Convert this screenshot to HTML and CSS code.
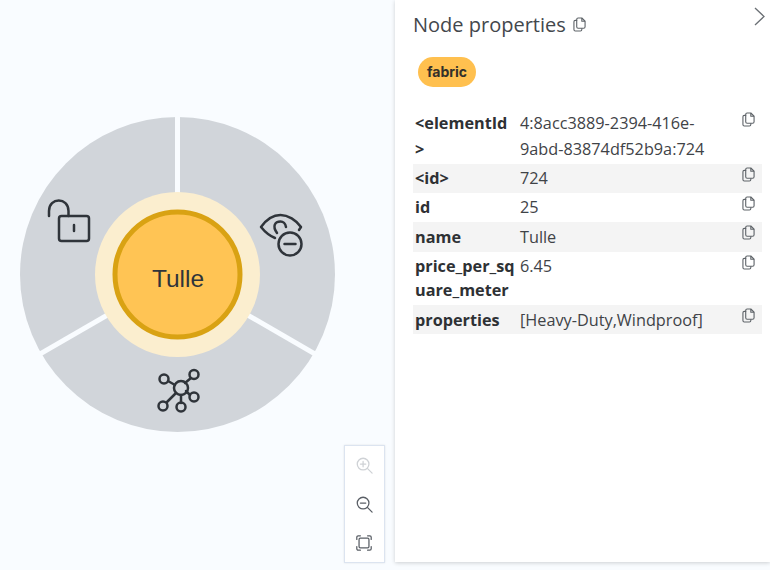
FILE: index.html
```html
<!DOCTYPE html>
<html lang="en">
<head>
    <meta charset="UTF-8">
    <title>Node properties</title>
    <meta name="viewport" content="width=device-width, initial-scale=1.0">
    <link rel="stylesheet" href="styles.css">
</head>
<body>
    <svg width="0" height="0" class="defs">
        <symbol id="copy" viewBox="0 0 14 16">
            <path d="M4.500 3.500H2.500C1.700 3.500 1 4.200 1 5V13.500C1 14.300 1.700 15 2.500 15H8C8.800 15 9.500 14.300 9.500 13.500V12" />
            <path d="M5.500 1H9.500L13 4.500V10.500C13 11.300 12.300 12 11.500 12H5.500C4.700 12 4 11.300 4 10.500V2.500C4 1.700 4.700 1 5.500 1Z" />
            <path d="M9.500 1V4.500H13" />
        </symbol>
    </svg>
    <main class="graph">
        <svg class="wheel" width="395" height="570" viewBox="0 0 395 570">
            <circle cx="177.500" cy="274.500" r="157.500" fill="#d1d5da" />
            <g stroke="#f9fcff" stroke-width="5">
                <line x1="177.500" y1="274.500" x2="177.500" y2="110" />
                <line x1="177.500" y1="274.500" x2="320" y2="356.800" />
                <line x1="177.500" y1="274.500" x2="35" y2="356.800" />
            </g>
            <circle cx="177.500" cy="274.500" r="82.500" fill="#fbeecf" />
            <circle cx="177.500" cy="274.500" r="62.500" fill="#ffc454" stroke="#d9a213" stroke-width="5" />
            <text class="node-label" x="178" y="286.500" text-anchor="middle">Tulle</text>
            <g class="wheel-icon">
                <path d="M49 216v-5c0-14 19.500-14 19.500 0v5" />
                <rect x="59" y="216" width="30" height="25" rx="2.500" />
                <path d="M74 225v6" />
            </g>
            <g class="wheel-icon">
                <path d="M275 238C270 236 265 232 261 227C266 220 273 215 280.500 215C288 215 296 220 301 227L299 230" />
                <path d="M277 233C272 226 275 221.500 280.500 221.500C283 221.500 285.500 223.500 286 227" />
                <circle cx="290" cy="244" r="11.500" />
                <path d="M284.500 244h11" />
            </g>
            <g class="wheel-icon">
                <circle cx="181" cy="388" r="7" />
                <circle cx="164" cy="379" r="4.500" />
                <circle cx="194" cy="374.500" r="4.500" />
                <circle cx="194" cy="397" r="4.500" />
                <circle cx="181" cy="407" r="4.500" />
                <circle cx="163" cy="406" r="4.500" />
                <path d="M168 381l7 4M191 378l-6 5M190 395l-4-4M181 395v8M167 402l9-9" />
            </g>
        </svg>
        <div class="zoom-bar">
            <svg width="18" height="18" viewBox="0 0 20 20" class="zoom-off">
                <circle cx="9" cy="9" r="6.500" /><path d="M14 14l5 5M6 9h6M9 6v6" />
            </svg>
            <svg width="18" height="18" viewBox="0 0 20 20">
                <circle cx="9" cy="9" r="6.500" /><path d="M14 14l5 5M6 9h6" />
            </svg>
            <svg width="18" height="18" viewBox="0 0 20 20">
                <rect x="4.500" y="4.500" width="11" height="11" rx="1.500" />
                <path d="M2 6V3.500C2 2.700 2.700 2 3.500 2H6M14 2h2.500c.8 0 1.500.7 1.500 1.500V6M18 14v2.500c0 .8-.7 1.500-1.500 1.500H14M6 18H3.500C2.700 18 2 17.300 2 16.500V14" />
            </svg>
        </div>
    </main>
    <aside class="panel">
        <svg class="close" width="14" height="20" viewBox="0 0 14 20"><path d="M2 2l9 8.500L2 19" /></svg>
        <h2>Node properties <svg class="copy" width="13" height="15"><use href="#copy" /></svg></h2>
        <div class="labels"><span class="badge">fabric</span></div>
        <div class="props">
            <div class="prop">
                <div class="key">&lt;elementId&gt;</div>
                <div class="value">4:8acc3889-2394-416e-9abd-83874df52b9a:724</div>
                <svg class="copy" width="13" height="15"><use href="#copy" /></svg>
            </div>
            <div class="prop">
                <div class="key">&lt;id&gt;</div>
                <div class="value">724</div>
                <svg class="copy" width="13" height="15"><use href="#copy" /></svg>
            </div>
            <div class="prop">
                <div class="key">id</div>
                <div class="value">25</div>
                <svg class="copy" width="13" height="15"><use href="#copy" /></svg>
            </div>
            <div class="prop">
                <div class="key">name</div>
                <div class="value">Tulle</div>
                <svg class="copy" width="13" height="15"><use href="#copy" /></svg>
            </div>
            <div class="prop">
                <div class="key">price_per_square_meter</div>
                <div class="value">6.45</div>
                <svg class="copy" width="13" height="15"><use href="#copy" /></svg>
            </div>
            <div class="prop">
                <div class="key">properties</div>
                <div class="value">[Heavy-Duty,Windproof]</div>
                <svg class="copy" width="13" height="15"><use href="#copy" /></svg>
            </div>
        </div>
    </aside>
</body>
</html>
```

FILE: styles.css
```css
html, body {
    height: 570px;
    overflow: hidden;
}
body {
    display: flex;
    align-items: flex-start;
    margin: 0;
    background: #f9fcff;
    font-family: "Open Sans", Arial, sans-serif;
    color: #3f4347;
}
.defs {
    position: absolute;
}
.graph {
    position: relative;
    flex: 0 0 395px;
    height: 570px;
}
.wheel {
    display: block;
}
.node-label {
    font-family: "Liberation Sans", Arial, sans-serif;
    font-size: 24.500px;
    fill: #2f343a;
}
.wheel-icon {
    fill: none;
    stroke: #2f343a;
    stroke-width: 2.500;
    stroke-linecap: round;
    stroke-linejoin: round;
}
.zoom-bar {
    position: absolute;
    left: 344px;
    top: 445px;
    box-sizing: border-box;
    width: 41px;
    height: 118px;
    padding: 10px 2px 10px 0;
    display: flex;
    flex-direction: column;
    align-items: center;
    gap: 21px;
    background: #fff;
    border: 1px solid #dce4f0;
    box-shadow: 0 0 2px rgba(0,0,0,0.1);
}
.zoom-bar svg {
    fill: none;
    stroke: #5a5f66;
    stroke-width: 1.400;
    stroke-linecap: round;
}
.zoom-bar .zoom-off {
    stroke: #cfd2d6;
}
.panel {
    position: relative;
    box-sizing: border-box;
    flex: 0 0 375px;
    height: 562px;
    padding: 12px 8px 0 18px;
    background: #fff;
    box-shadow: 0 1px 4px rgba(0,0,0,0.18);
}
.close {
    position: absolute;
    right: 3px;
    top: 6px;
    fill: none;
    stroke: #6b7075;
    stroke-width: 1.300;
}
h2 {
    margin: 0 0 19px;
    font-size: 20px;
    line-height: 26px;
    font-weight: 400;
    color: #43474c;
}
h2 .copy {
    margin-left: 2px;
}
.copy {
    fill: none;
    stroke: #5f6469;
    stroke-width: 1.200;
    stroke-linejoin: round;
}
.labels {
    padding-left: 5px;
    margin-bottom: 21.700px;
}
.badge {
    display: inline-block;
    height: 30px;
    padding: 0 9px;
    border-radius: 15px;
    background: #ffc04f;
    font-family: Inter, "Liberation Sans", sans-serif;
    font-size: 14px;
    font-weight: 700;
    line-height: 30px;
    color: #33302a;
}
.props {
    width: 349px;
    font-size: 16.250px;
    line-height: 24.400px;
}
.prop {
    display: grid;
    grid-template-columns: 105px 1fr 13px;
    padding: 2.450px 7px 2.450px 0;
    align-items: start;
}
.prop:first-child {
    padding-top: 1.600px;
    padding-bottom: 1.400px;
    line-height: 26px;
}
.prop:nth-child(even) {
    background: #f4f4f4;
}
.key {
    padding: 0 2px;
    font-weight: 700;
    color: #2e3134;
    overflow-wrap: anywhere;
}
.value {
    padding: 0 19px 0 2px;
    overflow-wrap: anywhere;
}
.prop .copy {
    display: block;
    margin-top: 0.600px;
}
.prop:first-child .copy {
    margin-top: 1.900px;
}
```
